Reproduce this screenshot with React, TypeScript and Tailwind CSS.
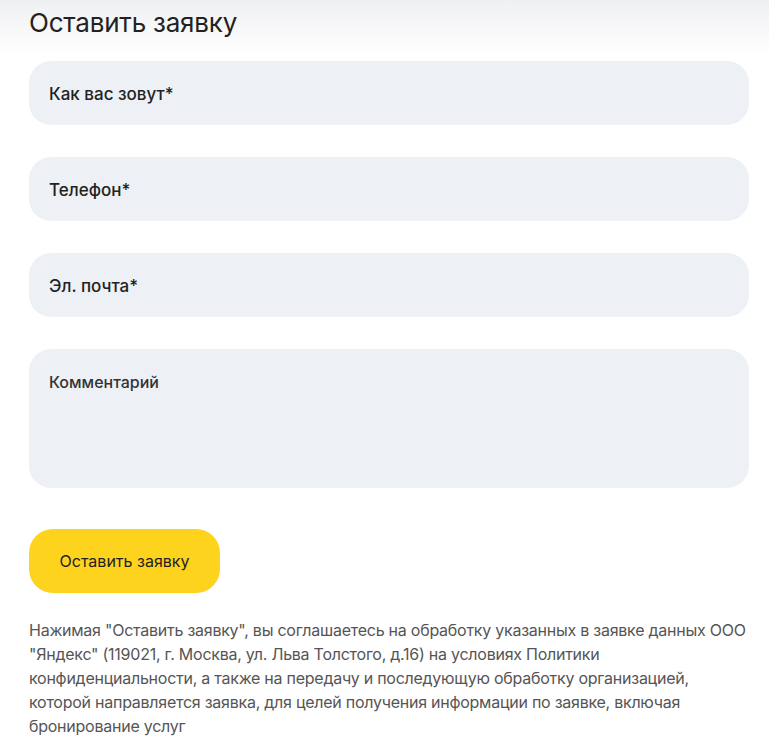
import React from "react";

export default function App() {
  const fields = ["Как вас зовут*", "Телефон*", "Эл. почта*"];
  return (
    <div
      className="min-h-[748px] w-[769px] bg-white bg-[linear-gradient(to_bottom,#eff0f2_0px,#ffffff_55px)] px-[29px] pt-[6px] text-[#1e1e1e]"
      style={{ fontFamily: "Inter, 'Noto Sans', sans-serif" }}
    >
      <h2 className="text-[26px] leading-[34px] font-normal tracking-[-0.2px] text-[#222]">Оставить заявку</h2>
      <form className="mt-[21px] flex w-[720px] flex-col gap-[32px]">
        {fields.map((f) => (
          <div key={f} className="flex h-[64px] items-center rounded-[22px] bg-[#edf0f4] px-[20px] pt-[4px] text-[17px] font-medium text-[#222]">
            {f}
          </div>
        ))}
        <div className="h-[139px] rounded-[22px] bg-[#edf0f4] px-[20px] pt-[22px] text-[16px] font-medium leading-[22px] text-[#333]">
          Комментарий
        </div>
        <button
          type="button"
          className="mt-[9px] flex h-[64px] w-[191px] items-center justify-center rounded-[24px] bg-[#fdd31e] text-[16px] font-normal text-[#222]"
        >
          Оставить заявку
        </button>
        <p className="-mt-[7px] w-[725px] text-[16px] leading-[24px] tracking-[-0.25px] text-[#555]">
          Нажимая "Оставить заявку", вы соглашаетесь на обработку указанных в заявке данных ООО "Яндекс" (119021, г. Москва, ул. Льва Толстого, д.16) на условиях Политики конфиденциальности, а также на передачу и последующую обработку организацией, которой направляется заявка, для целей получения информации по заявке, включая бронирование услуг
        </p>
      </form>
    </div>
  );
}
